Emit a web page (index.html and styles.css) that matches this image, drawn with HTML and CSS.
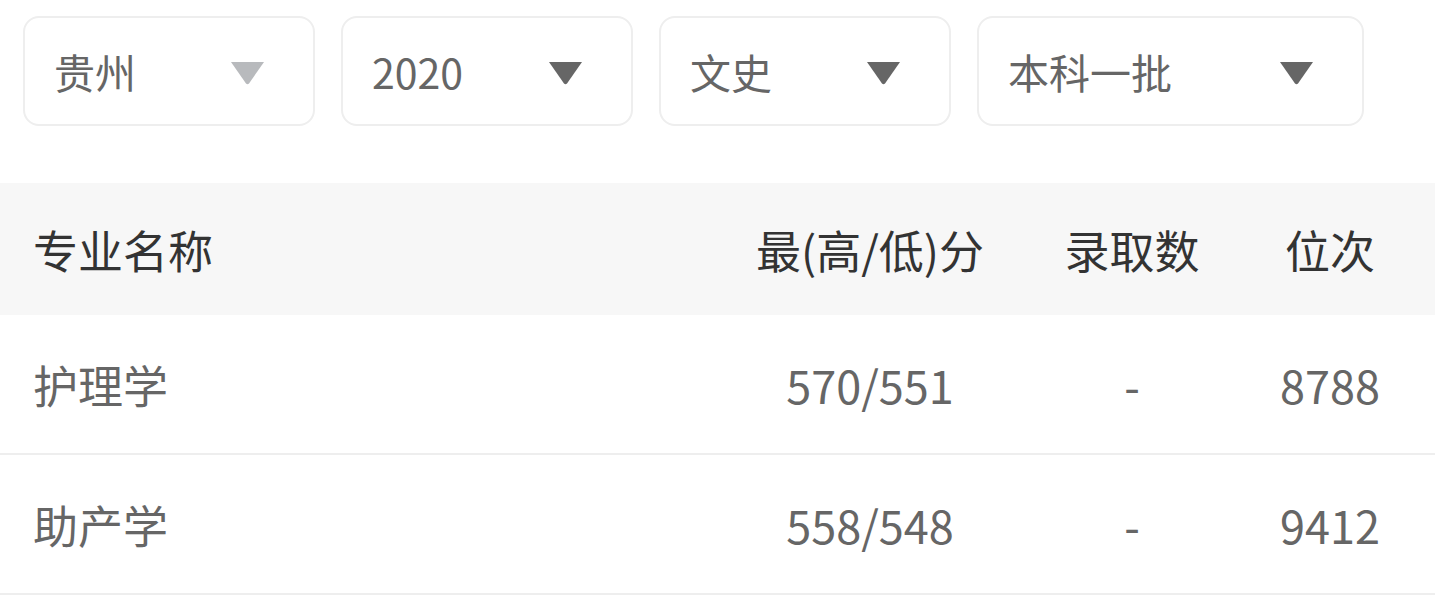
FILE: index.html
```html
<!DOCTYPE html>
<html lang="zh-CN">
<head>
<meta charset="utf-8">
<link rel="stylesheet" href="styles.css">
</head>
<body>
<div class="filters">
  <div class="select w-s"><span>贵州</span><svg class="caret light" viewBox="0 0 35 24" width="35" height="24"><path d="M1 1 H34 L19 22.5 Q17.5 24 16 22.5 Z"/></svg></div>
  <div class="select w-s"><span>2020</span><svg class="caret" viewBox="0 0 35 24" width="35" height="24"><path d="M1 1 H34 L19 22.5 Q17.5 24 16 22.5 Z"/></svg></div>
  <div class="select w-s"><span>文史</span><svg class="caret" viewBox="0 0 35 24" width="35" height="24"><path d="M1 1 H34 L19 22.5 Q17.5 24 16 22.5 Z"/></svg></div>
  <div class="select w-l"><span>本科一批</span><svg class="caret" viewBox="0 0 35 24" width="35" height="24"><path d="M1 1 H34 L19 22.5 Q17.5 24 16 22.5 Z"/></svg></div>
</div>
<div class="table">
  <div class="row head">
    <div class="c-name">专业名称</div>
    <div class="c-mid">最(高/低)分</div>
    <div class="c-mid">录取数</div>
    <div class="c-mid">位次</div>
  </div>
  <div class="row">
    <div class="c-name">护理学</div>
    <div class="c-mid">570/551</div>
    <div class="c-mid">-</div>
    <div class="c-mid">8788</div>
  </div>
  <div class="row">
    <div class="c-name">助产学</div>
    <div class="c-mid">558/548</div>
    <div class="c-mid">-</div>
    <div class="c-mid">9412</div>
  </div>
</div>
</body>
</html>
```
FILE: styles.css
```css
html, body {
  margin: 0;
  padding: 0;
  background: #fff;
  font-family: "Noto Sans CJK SC", "Noto Sans", sans-serif;
}
.filters {
  display: flex;
  gap: 26px;
  padding: 16px 23px 0 23px;
  height: 110px;
  box-sizing: content-box;
}
.select {
  box-sizing: border-box;
  height: 110px;
  border: 2px solid #eeeeee;
  border-radius: 16px;
  display: flex;
  align-items: center;
  justify-content: space-between;
  padding: 0 48px 0 29px;
  font-size: 41px;
  color: #666;
}
.select span { line-height: 1; }
.w-s { width: 292px; }
.w-l { width: 387px; }
.caret { fill: #666; display: block; margin-top: 3px; }
.caret.light { fill: #b8babd; }
.table {
  margin-top: 57px;
}
.row {
  display: grid;
  grid-template-columns: 1fr 262px 262px 134px;
  padding: 0 38px 0 33px;
  height: 138px;
  align-items: center;
  font-size: 45px;
  color: #666;
  border-bottom: 2px solid #eeeeee;
}
.row.head {
  height: 132px;
  background: #f7f7f7;
  color: #333;
  border-bottom: none;
}
.c-name { text-align: left; }
.c-mid { text-align: center; }
```
